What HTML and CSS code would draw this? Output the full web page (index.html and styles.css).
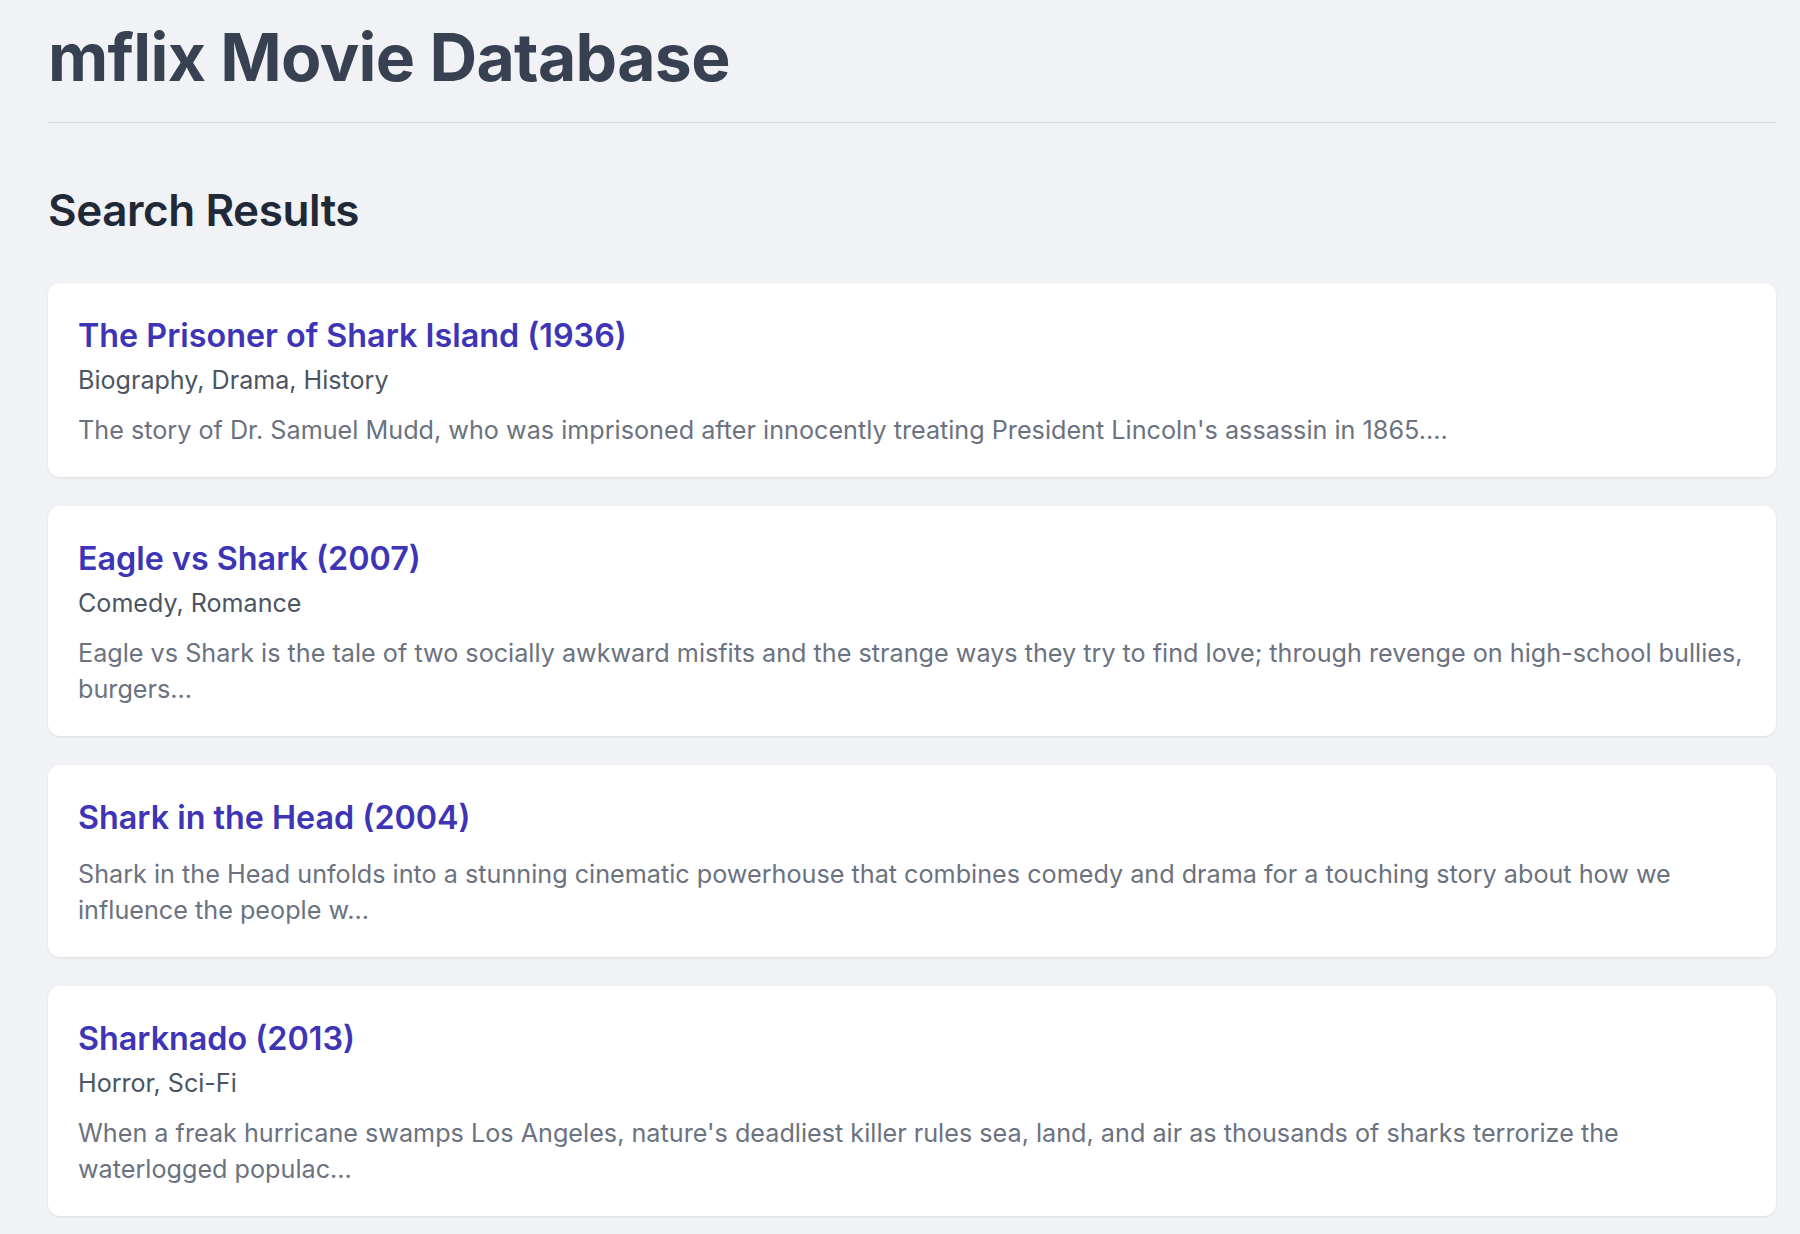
FILE: index.html
```html
<!DOCTYPE html>
<html lang="en">
<head>
<meta charset="utf-8">
<title>mflix Movie Database</title>
<link rel="stylesheet" href="styles.css">
</head>
<body>
<div class="page">
  <header class="site-header">
    <h1 class="site-title">mflix Movie Database</h1>
  </header>
  <main class="results">
    <h2 class="results-title">Search Results</h2>
    <ul class="movie-list">
      <li class="movie-card">
        <h3 class="movie-title">The Prisoner of Shark Island (1936)</h3>
        <p class="movie-genres">Biography, Drama, History</p>
        <p class="movie-plot">The story of Dr. Samuel Mudd, who was imprisoned after innocently treating President Lincoln's assassin in 1865....</p>
      </li>
      <li class="movie-card">
        <h3 class="movie-title">Eagle vs Shark (2007)</h3>
        <p class="movie-genres">Comedy, Romance</p>
        <p class="movie-plot">Eagle vs Shark is the tale of two socially awkward misfits and the strange ways they try to find love; through revenge on high-school bullies, burgers...</p>
      </li>
      <li class="movie-card">
        <h3 class="movie-title">Shark in the Head (2004)</h3>
        <p class="movie-plot">Shark in the Head unfolds into a stunning cinematic powerhouse that combines comedy and drama for a touching story about how we influence the people w...</p>
      </li>
      <li class="movie-card">
        <h3 class="movie-title">Sharknado (2013)</h3>
        <p class="movie-genres">Horror, Sci-Fi</p>
        <p class="movie-plot">When a freak hurricane swamps Los Angeles, nature's deadliest killer rules sea, land, and air as thousands of sharks terrorize the waterlogged populac...</p>
      </li>
    </ul>
  </main>
</div>
</body>
</html>
```

FILE: styles.css
```css
* { box-sizing: border-box; }

html, body {
  margin: 0;
  padding: 0;
  background: #f0f2f5;
}

body {
  font-family: Inter, "Noto Sans", "Liberation Sans", sans-serif;
  color: #374151;
}

.page {
  padding: 18px 24px 40px 48px;
}

.site-header {
  border-bottom: 1px solid #d5d8dd;
  padding-bottom: 25px;
}

.site-title {
  margin: 0;
  font-size: 66px;
  line-height: 1.2;
  font-weight: 700;
  letter-spacing: -0.01em;
  color: #374151;
}

.results-title {
  margin: 61px 0 46px;
  font-size: 44px;
  line-height: 1.2;
  font-weight: 600;
  letter-spacing: -0.01em;
  color: #1f2937;
}

.movie-list {
  list-style: none;
  margin: 0;
  padding: 0;
  display: flex;
  flex-direction: column;
  gap: 29px;
}

.movie-card {
  background: #ffffff;
  border-radius: 12px;
  padding: 29px 30px;
  box-shadow: 0 1px 3px rgba(0, 0, 0, 0.06), 0 1px 2px rgba(0, 0, 0, 0.03);
}

.movie-title {
  margin: 0 0 2px;
  font-size: 32.3px;
  line-height: 48px;
  font-weight: 600;
  color: #3d34b6;
}

.movie-genres {
  margin: 0 0 14px;
  font-size: 25.1px;
  line-height: 36px;
  color: #4b5563;
}

.movie-plot {
  margin: 0;
  font-size: 25.2px;
  line-height: 36px;
  color: #6b7280;
}

.movie-title + .movie-plot {
  margin-top: 14px;
}
```
